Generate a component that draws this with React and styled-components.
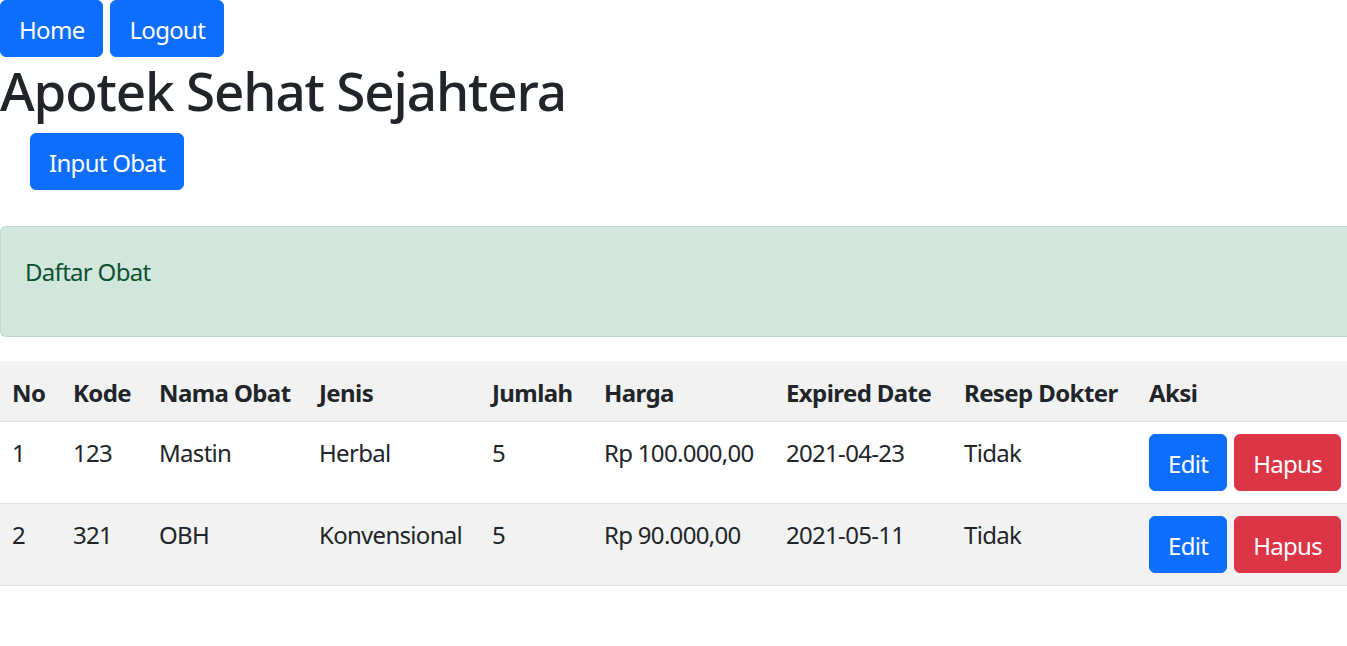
import React from 'react';
import styled, { createGlobalStyle } from 'styled-components';

const GlobalStyle = createGlobalStyle`
  html, body { margin: 0; padding: 0; overflow-x: hidden; background: #fff; }
  body {
    font-family: "Noto Sans", "Open Sans", sans-serif;
    font-size: 24px; line-height: 36px; color: #212529;
  }
`;

const Page = styled.div` width: 1354px; `;

const Nav = styled.div` display: flex; gap: 7px; `;

const Button = styled.button`
  font-family: inherit; font-size: 24px; line-height: 36px;
  padding: 11px 18px 8px; border-radius: 6px; cursor: pointer;
  color: #fff; border: 1px solid ${p => p.$variant === 'danger' ? '#dc3545' : '#0d6efd'};
  background-color: ${p => p.$variant === 'danger' ? '#dc3545' : '#0d6efd'};
  letter-spacing: -0.7px;
`;

const Title = styled.h1`
  margin: 0 0 12px; padding-top: 3px; font-size: 53px; line-height: 61px; font-weight: 500;
  letter-spacing: -1.15px;
`;

const Actions = styled.div` padding-left: 30px; margin-bottom: 36px; `;

const Alert = styled.div`
  background: #d1e7dd; color: #0f5132; border: 1px solid #badbcc;
  border-right: 0; border-radius: 6px 0 0 6px;
  padding: 24px; margin-bottom: 24px;
  p { margin: 0 0 22px; padding-top: 3px; letter-spacing: -0.7px; }
`;

const Table = styled.table`
  width: 1354px; border-collapse: collapse; table-layout: fixed;
  th, td {
    padding: 13px 12px 11px; text-align: left; vertical-align: top;
    border-bottom: 1px solid #dee2e6; letter-spacing: -0.7px;
    white-space: nowrap;
  }
  th { font-weight: 700; letter-spacing: -0.6px; padding: 14px 12px 10px; }
  td:last-child { padding: 12px; }
  thead tr { background: #f2f2f2; }
  tbody tr:nth-child(even) { background: #f2f2f2; }
`;

const ButtonGroup = styled.div` display: flex; gap: 7px; `;

const columns = [
  ['No', 61], ['Kode', 86], ['Nama Obat', 160], ['Jenis', 173], ['Jumlah', 112],
  ['Harga', 182], ['Expired Date', 178], ['Resep Dokter', 185], ['Aksi', 217],
];

const rows = [
  ['1', '123', 'Mastin', 'Herbal', '5', 'Rp 100.000,00', '2021-04-23', 'Tidak'],
  ['2', '321', 'OBH', 'Konvensional', '5', 'Rp 90.000,00', '2021-05-11', 'Tidak'],
];

export default function App() {
  return (
    <Page>
      <GlobalStyle />
      <Nav>
        <Button>Home</Button>
        <Button>Logout</Button>
      </Nav>
      <Title>Apotek Sehat Sejahtera</Title>
      <Actions>
        <Button>Input Obat</Button>
      </Actions>
      <Alert><p>Daftar Obat</p></Alert>
      <Table>
        <colgroup>
          {columns.map(([name, w]) => <col key={name} style={{ width: w }} />)}
        </colgroup>
        <thead>
          <tr>{columns.map(([name]) => <th key={name}>{name}</th>)}</tr>
        </thead>
        <tbody>
          {rows.map(r => (
            <tr key={r[0]}>
              {r.map((c, i) => <td key={i}>{c}</td>)}
              <td>
                <ButtonGroup>
                  <Button>Edit</Button>
                  <Button $variant="danger">Hapus</Button>
                </ButtonGroup>
              </td>
            </tr>
          ))}
        </tbody>
      </Table>
    </Page>
  );
}
